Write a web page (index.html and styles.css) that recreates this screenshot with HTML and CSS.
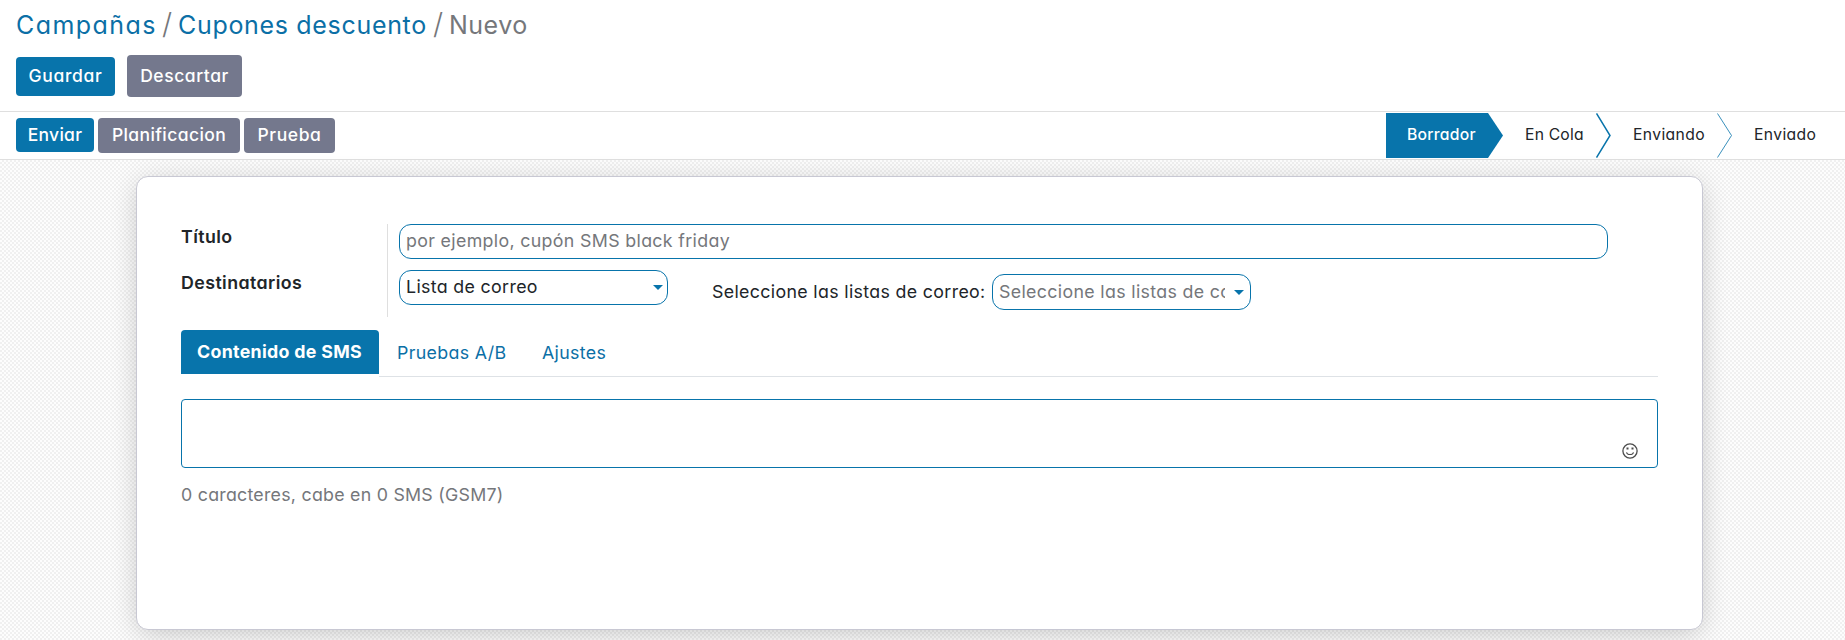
FILE: index.html
```html
<!DOCTYPE html>
<html lang="es">
<head>
<meta charset="utf-8">
<title>Cupones descuento</title>
<link rel="stylesheet" href="styles.css">
</head>
<body>
<header class="control">
  <nav class="crumbs"><a class="c1">Campañas</a><i>/</i><a class="c2">Cupones descuento</a><i>/</i><span class="c3">Nuevo</span></nav>
  <div class="actions"><button class="btn primary save">Guardar</button><button class="btn discard">Descartar</button></div>
</header>
<section class="statusbar">
  <div class="tools"><button class="btn primary send">Enviar</button><button class="btn plan">Planificacion</button><button class="btn test">Prueba</button></div>
  <div class="steps">
    <span class="step active"><b class="s1">Borrador</b></span>
    <span class="step queue"><b class="s2">En Cola</b></span>
    <svg class="chev" width="16" height="45" viewBox="0 0 16 45"><path d="M.5 .5L14 22.500L.5 44.500" fill="none" stroke="#0874ab" stroke-width="1.500"/></svg>
    <span class="step sending"><b class="s3">Enviando</b></span>
    <svg class="chev" width="16" height="45" viewBox="0 0 16 45"><path d="M.5 .5L14.500 22.500L.5 44.500" fill="none" stroke="#0874ab" stroke-width=".8"/></svg>
    <span class="step sent"><b class="s4">Enviado</b></span>
  </div>
</section>
<main class="canvas">
  <article class="sheet">
    <div class="group">
      <div class="labels"><label class="l1">Título</label><label class="l2">Destinatarios</label></div>
      <div class="fields">
        <div class="field title"><span class="ph p1">por ejemplo, cupón SMS black friday</span></div>
        <div class="row">
          <div class="field model"><span class="p2">Lista de correo</span><i class="caret"></i></div>
          <div class="pick"><span class="p3">Seleccione las listas de correo:</span>
          <div class="field lists"><span class="clip"><span class="ph p4">Seleccione las listas de correo</span></span><i class="caret"></i></div></div>
        </div>
      </div>
    </div>
    <div class="tabs"><a class="tab on"><span class="t1">Contenido de SMS</span></a><div class="rest"><a class="t2">Pruebas A/B</a><a class="t3">Ajustes</a></div></div>
    <div class="body">
      <svg width="16" height="16" viewBox="0 0 16 16"><circle cx="8" cy="8" r="7.100" fill="none" stroke="#4c4c4c" stroke-width="1.300"/><rect x="4.500" y="4.500" width="2" height="2" fill="#4c4c4c"/><rect x="9.500" y="4.500" width="2" height="2" fill="#4c4c4c"/><path d="M4.500 9.300C5.500 12.300 10.500 12.300 11.500 9.300" fill="none" stroke="#4c4c4c" stroke-width="1.100"/></svg>
    </div>
    <p class="count"><span class="p5">0 caracteres, cabe en 0 SMS (GSM7)</span></p>
  </article>
</main>
</body>
</html>
```

FILE: styles.css
```css
*{box-sizing:border-box}
body{margin:0;height:640px;overflow:hidden;display:flex;flex-direction:column;background:#fff;color:#212529;font:400 17.8px/26px Inter,"Open Sans",sans-serif;font-feature-settings:"cv11";white-space:nowrap;letter-spacing:.34px}
i,b{font-style:normal;font-weight:inherit}
.control{height:112px;padding:10px 16px 0;border-bottom:1px solid #dfdfdf;flex:none}
.crumbs{display:flex;height:32px;font-size:25px;line-height:31px;color:#75777b}
.crumbs a{color:#0b6fa6}
.crumbs i{width:22px;text-align:center;font-size:29px;line-height:28px;letter-spacing:0;font-weight:300}
.c1{width:140px;letter-spacing:1.45px}
.c2{width:249px;letter-spacing:.68px}
.c3{letter-spacing:.5px}
.actions{display:flex;align-items:center;gap:12px;height:42px;margin-top:13px}
.btn{font:500 17.5px/26px Inter,"Open Sans",sans-serif;font-feature-settings:"cv11";color:#fff;border:0;border-radius:4px;background:#74788d;padding:0}
.primary{background:#0874ab}
.save{width:99px;height:39px;letter-spacing:.7px}.discard{width:115px;height:42px;letter-spacing:.55px}
.statusbar{height:48px;flex:none;display:flex;justify-content:space-between;border-bottom:1px solid #dfdfdf}
.tools{display:flex;gap:4px;padding:6px 0 0 16px}
.send{width:78px;height:34px;letter-spacing:.25px}.plan{width:142px;height:35px;letter-spacing:.4px;padding-bottom:1px}.test{width:91px;height:35px;letter-spacing:.6px;padding-bottom:1px}
.steps{display:flex;padding-top:1px;font-size:15.700px;line-height:44px;width:459px;letter-spacing:.38px}
.step{height:45px;text-align:left}
.active{width:117px;padding-left:21px;background:#0874ab;color:#fff;font-weight:500;letter-spacing:.25px;clip-path:polygon(0 0,102px 0,117px 50%,102px 100%,0 100%)}
.queue{width:93px;padding-left:22px;letter-spacing:.2px}
.sending{width:105px;padding-left:21px}
.sent{width:112px;padding-left:21px}
.chev{flex:none}
.canvas{flex:1;padding:16px 142px 0 136px;background:repeating-conic-gradient(#f0f0f0 0 25%,#fdfdfd 0 50%) 0 0/4px 4px}
.sheet{height:454px;background:#fff;border:1px solid #c8c8d3;border-radius:12px;padding:47px 44px 0;box-shadow:0 5px 28px -3px rgba(0,0,0,.22)}
.group{display:flex;height:93px}
.labels{width:207px;border-right:1px solid #dfdfdf;display:flex;flex-direction:column;gap:20px;font-weight:600}
.labels label{letter-spacing:.42px}
.fields{padding-left:11px;display:flex;flex-direction:column;gap:11px}
.field{border:1px solid #0874ab;border-radius:12px;height:35px;line-height:33px;padding:0 4px 0 6px;display:flex;align-items:center;justify-content:space-between}
.title{width:1209px}.model{width:269px}.lists{width:259px;height:36px;padding-right:6px}
.title span,.model span{padding-bottom:2px}
.clip{width:226px;overflow:hidden;padding-bottom:1px}
.ph{color:#75777b}
.row{display:flex;gap:44px}
.pick{display:flex;align-items:center;gap:7px;padding-top:4px;height:40px}
.p3{width:273px}
.caret{border:5.500px solid transparent;border-top-color:#0874ab;border-bottom:0}
.tabs{display:flex;height:47px;margin-top:13px}
.on{width:198px;height:44px;line-height:44px;padding-left:16px;background:#0874ab;color:#fff;border-radius:4px 4px 0 0;font-weight:700;letter-spacing:.3px}
.rest{flex:1;border-bottom:1px solid #dee2e6;color:#0b6fa6;display:flex;line-height:46px;padding-left:18px}
.t2{width:145px}
.body{height:69px;margin-top:22px;border:1px solid #0874ab;border-radius:4px;display:flex;justify-content:flex-end;align-items:flex-end;padding:0 19px 8px 0}
.count{margin:14px 0 0;color:#75777b;letter-spacing:.25px}
```
